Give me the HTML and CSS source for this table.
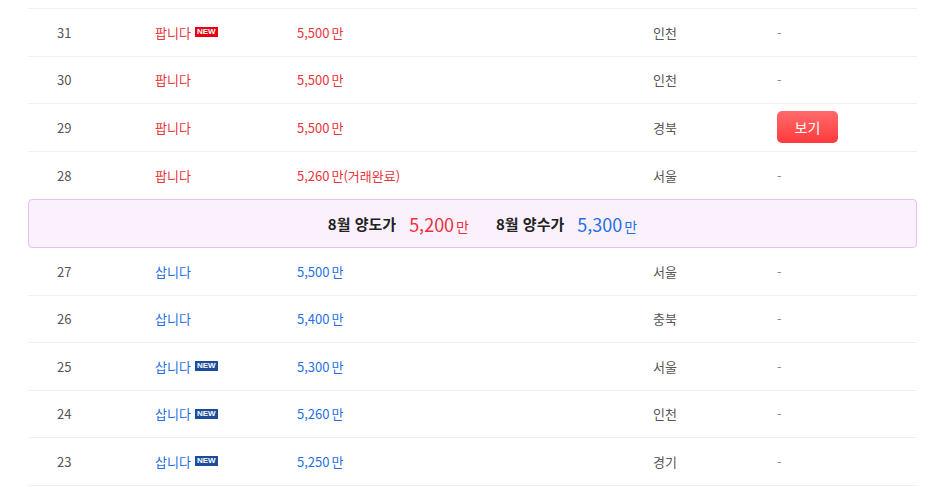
FILE: index.html
```html
<!DOCTYPE html>
<html lang="ko">
<head>
    <meta charset="UTF-8">
    <meta name="viewport" content="width=device-width, initial-scale=1.0">
    <title>양도양수 게시판</title>
    <link rel="stylesheet" href="styles.css">
</head>
<body>
    <div class="board">
        <div class="row">
            <div class="num">31</div>
            <div class="title sell">팝니다<span class="badge new-sell">NEW</span></div>
            <div class="price sell">5,500<span class="unit">만</span></div>
            <div class="area">인천</div>
            <div class="etc">-</div>
        </div>
        <div class="row">
            <div class="num">30</div>
            <div class="title sell">팝니다</div>
            <div class="price sell">5,500<span class="unit">만</span></div>
            <div class="area">인천</div>
            <div class="etc">-</div>
        </div>
        <div class="row">
            <div class="num">29</div>
            <div class="title sell">팝니다</div>
            <div class="price sell">5,500<span class="unit">만</span></div>
            <div class="area">경북</div>
            <div class="etc"><button class="view-btn">보기</button></div>
        </div>
        <div class="row last">
            <div class="num">28</div>
            <div class="title sell">팝니다</div>
            <div class="price sell">5,260<span class="unit">만</span>(거래완료)</div>
            <div class="area">서울</div>
            <div class="etc">-</div>
        </div>

        <!-- 이번달 시세 -->
        <div class="month-price">
            <span class="label">8월 양도가</span>
            <span class="value sell">5,200<span class="unit">만</span></span>
            <span class="label">8월 양수가</span>
            <span class="value buy">5,300<span class="unit">만</span></span>
        </div>

        <div class="row">
            <div class="num">27</div>
            <div class="title buy">삽니다</div>
            <div class="price buy">5,500<span class="unit">만</span></div>
            <div class="area">서울</div>
            <div class="etc">-</div>
        </div>
        <div class="row">
            <div class="num">26</div>
            <div class="title buy">삽니다</div>
            <div class="price buy">5,400<span class="unit">만</span></div>
            <div class="area">충북</div>
            <div class="etc">-</div>
        </div>
        <div class="row">
            <div class="num">25</div>
            <div class="title buy">삽니다<span class="badge new-buy">NEW</span></div>
            <div class="price buy">5,300<span class="unit">만</span></div>
            <div class="area">서울</div>
            <div class="etc">-</div>
        </div>
        <div class="row">
            <div class="num">24</div>
            <div class="title buy">삽니다<span class="badge new-buy">NEW</span></div>
            <div class="price buy">5,260<span class="unit">만</span></div>
            <div class="area">인천</div>
            <div class="etc">-</div>
        </div>
        <div class="row">
            <div class="num">23</div>
            <div class="title buy">삽니다<span class="badge new-buy">NEW</span></div>
            <div class="price buy">5,250<span class="unit">만</span></div>
            <div class="area">경기</div>
            <div class="etc">-</div>
        </div>
    </div>
</body>
</html>
```

FILE: styles.css
```css
body {
    margin: 0;
    font-family: 'Noto Sans CJK KR', 'Noto Sans', sans-serif;
    font-size: 13px;
    color: #555;
    background-color: #fff;
}
.board {
    width: 889px;
    margin: 8px 0 0 28px;
    border-top: 1px solid #f0f0f0;
}
.row {
    display: grid;
    grid-template-columns: 98px 142px 356px 124px 1fr;
    align-items: center;
    height: 47.5px;
    box-sizing: border-box;
    padding-left: 29px;
    border-bottom: 1px solid #f0f0f0;
}
.row.last {
    border-bottom: none;
}
.sell {
    color: #e8333b;
}
.buy {
    color: #1f6fe3;
}
.title {
    display: flex;
    align-items: center;
}
.badge {
    display: inline-block;
    margin-left: 4px;
    padding: 0 2px;
    height: 10px;
    line-height: 10px;
    font-family: 'Liberation Sans', Arial, sans-serif;
    font-size: 8px;
    font-weight: bold;
    color: #fff;
}
.new-sell {
    background-color: #e60012;
}
.new-buy {
    background-color: #1b4d9b;
}
.unit {
    margin-left: 2px;
}
.area {
    color: #555;
}
.etc {
    color: #888;
}
.view-btn {
    width: 61px;
    height: 32px;
    border: none;
    border-radius: 5px;
    background: linear-gradient(to bottom, #ff6b6b, #ff3a3d);
    color: #fff;
    font-family: inherit;
    font-size: 14px;
    cursor: pointer;
}
.month-price {
    display: flex;
    align-items: center;
    justify-content: center;
    height: 49px;
    box-sizing: border-box;
    padding-left: 20px;
    background-color: #faf1fd;
    border: 1px solid #e3c2f0;
    border-radius: 4px;
}
.month-price .label {
    font-size: 15px;
    font-weight: bold;
    color: #222;
    margin-right: 13px;
}
.month-price .value {
    font-size: 18px;
    margin-right: 27px;
}
.month-price .value:last-child {
    margin-right: 0;
}
.month-price .value .unit {
    font-size: 14px;
}
```
